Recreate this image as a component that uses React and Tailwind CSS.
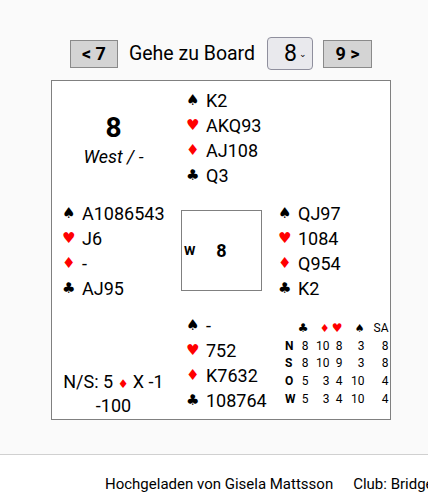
import React from "react";

const RED = "text-[#ff0000]";

function Suit({ s }) {
  const red = s === "♥" || s === "♦";
  return (
    <span className={`inline-block w-[20px] text-[15px] font-['DejaVu_Sans',sans-serif] ${red ? RED : "text-black"}`}>{s}</span>
  );
}

function Hand({ cards, className }) {
  const suits = ["♠", "♥", "♦", "♣"];
  return (
    <div className={`flex flex-col justify-center ${className}`}>
      {cards.map((c, i) => (
        <div key={i} className="flex items-center h-[25px] text-[18px] leading-[25px]">
          <Suit s={suits[i]} />
          <span>{c}</span>
        </div>
      ))}
    </div>
  );
}

const tricks = [
  ["N", "8", "10", "8", "3", "8"],
  ["S", "8", "10", "9", "3", "8"],
  ["O", "5", "3", "4", "10", "4"],
  ["W", "5", "3", "4", "10", "4"],
];

export default function App() {
  return (
    <div className="w-[428px] h-[493px] overflow-hidden bg-[#fafafa] text-black font-['Roboto',sans-serif]">
      <div className="h-[454px] pt-[37px]">
        <div className="ml-[51px] w-[340px]">
          <div className="flex items-center justify-center h-[33px]">
            <button className="h-[28px] w-[48px] bg-[#d4d4d4] border border-[#8a8a8a] text-[18px] font-bold leading-none">
              &lt; 7
            </button>
            <span className="ml-[11px] mr-[12px] text-[19.5px]">Gehe zu Board</span>
            <div className="h-[33px] w-[46px] rounded-[4px] bg-[#e9e9ed] border border-[#8f8f9d] flex items-center justify-end pr-[5px]">
              <span className="text-[23px] leading-none">8</span>
              <span className="text-[9px] ml-[2px] mt-[2px]">⌄</span>
            </div>
            <button className="ml-[10px] h-[28px] w-[49px] bg-[#d4d4d4] border border-[#8a8a8a] text-[18px] font-bold leading-none">
              9 &gt;
            </button>
          </div>

          <div className="mt-[10px] w-[340px] h-[340px] bg-white border border-[#808080] grid grid-cols-[113px_113px_112px] grid-rows-[113px_113px_112px]">
            <div className="flex flex-col items-center pt-[32px] pl-[10px]">
              <div className="text-[28px] font-bold leading-[30px]">8</div>
              <div className="mt-[3px] text-[18px] italic leading-[22px]">West / -</div>
            </div>
            <Hand cards={["K2", "AKQ93", "AJ108", "Q3"]} className="pl-[21px]" />
            <div />

            <Hand cards={["A1086543", "J6", "-", "AJ95"]} className="pl-[10px]" />
            <div className="flex items-center justify-center">
              <div className="w-[81px] h-[81px] border border-[#808080] grid grid-cols-[1fr_auto_1fr] items-center">
                <span className="pl-[2px] text-[13px] font-bold">W</span>
                <span className="text-[18px] font-bold">8</span>
                <span />
              </div>
            </div>
            <Hand cards={["QJ97", "1084", "Q954", "K2"]} className="pl-0" />

            <div className="flex flex-col items-center justify-end pb-[2px] pl-[10px] text-[18px] leading-[22px] whitespace-nowrap">
              <div>
                N/S: 5 <span className={`${RED} text-[12px] font-['DejaVu_Sans',sans-serif]`}>♦</span> X -1
              </div>
              <div>-100</div>
            </div>
            <Hand cards={["-", "752", "K7632", "108764"]} className="pl-[21px]" />
            <div className="pl-[7px] pt-[13px]">
              <table className="table-fixed text-[12px] leading-[17.7px] border-separate border-spacing-0">
                <thead>
                  <tr className="font-['DejaVu_Sans',sans-serif]">
                    <th className="w-[10px]"></th>
                    <th className="w-[13px] text-right font-normal text-[12px]">♣</th>
                    <th className={`w-[21px] text-right font-normal text-[11px] ${RED}`}>♦</th>
                    <th className={`w-[13px] text-right font-normal text-[12px] ${RED}`}>♥</th>
                    <th className="w-[22px] text-right font-normal text-[11px]">♠</th>
                    <th className="w-[24px] text-right font-normal font-['Roboto',sans-serif]">SA</th>
                  </tr>
                </thead>
                <tbody>
                  {tricks.map((r) => (
                    <tr key={r[0]}>
                      <td className="font-bold text-left">{r[0]}</td>
                      <td className="text-right">{r[1]}</td>
                      <td className="text-right">{r[2]}</td>
                      <td className="text-right">{r[3]}</td>
                      <td className="text-right">{r[4]}</td>
                      <td className="text-right">{r[5]}</td>
                    </tr>
                  ))}
                </tbody>
              </table>
            </div>
          </div>
        </div>
      </div>
      <div className="border-t border-[#d0d0d0] bg-white h-[39px] pt-[20px] pl-[105px] flex text-[15px] leading-[18px] whitespace-nowrap">
        <span>Hochgeladen von Gisela Mattsson</span>
        <span className="ml-[20px]">Club: Bridgeclub</span>
      </div>
    </div>
  );
}
